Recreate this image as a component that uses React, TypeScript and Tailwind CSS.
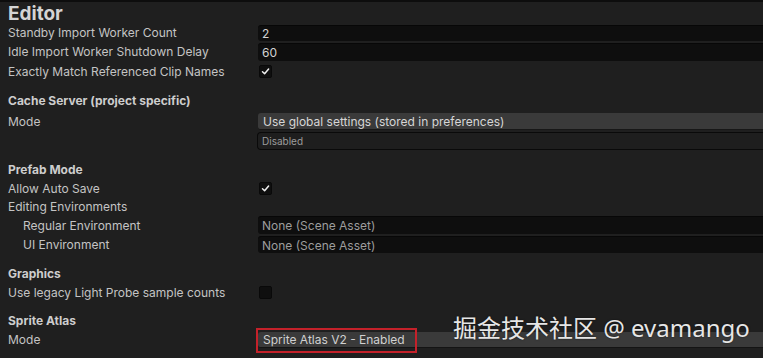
import React from "react";

const font = { fontFamily: "Inter, 'Noto Sans', sans-serif" };

function Check({ on }: { on: boolean }) {
  return (
    <div className="w-[13px] h-[13px] rounded-[2px] bg-[#0f0f0f] border border-[#090909] flex items-center justify-center">
      {on && (
        <svg width="9" height="9" viewBox="0 0 9 9">
          <polyline points="1.5,4.8 3.6,6.8 7.6,2" fill="none" stroke="#eeeeee" strokeWidth="1.5" strokeLinecap="round" strokeLinejoin="round" />
        </svg>
      )}
    </div>
  );
}

function Row({ label, h = "h-[19px]", indent = false, children }: { label?: string; h?: string; indent?: boolean; children?: React.ReactNode }) {
  return (
    <div className={`flex items-center ${h}`}>
      <div className={`w-[258px] shrink-0 text-[12px] text-[#c4c4c4] leading-none pt-[1px] ${indent ? "pl-[23px]" : "pl-[8px]"}`}>{label}</div>
      <div className="flex-1 min-w-0 flex items-center h-full">{children}</div>
    </div>
  );
}

function Heading({ text }: { text: string }) {
  return <div className="h-[19px] flex items-center pl-[8px] pt-[1px] text-[12px] font-bold text-[#cdcdcd] leading-none">{text}</div>;
}

function Field({ text, dim = false, h = "h-[17px]" }: { text: string; dim?: boolean; h?: string }) {
  return (
    <div className={`w-full ${h} bg-[#0e0e0e] border-t border-[#070707] rounded-l-[3px] flex items-center pl-[4px] pt-[1px] text-[12px] leading-none ${dim ? "text-[#9d9d9d]" : "text-[#d2d2d2]"}`}>
      {text}
    </div>
  );
}

export default function App() {
  return (
    <div className="relative w-[763px] h-[358px] overflow-hidden bg-[#1f1f1f]" style={font}>
      <div className="h-[2px] bg-[#0d0d0d]" />
      <div className="h-[21px] flex items-center pl-[8px] text-[19px] font-bold text-[#d4d4d4] leading-none pt-[2px]">Editor</div>

      <Row label="Standby Import Worker Count"><Field text="2" h="h-[16px]" /></Row>
      <Row label="Idle Import Worker Shutdown Delay"><Field text="60" h="h-[18px]" /></Row>
      <Row label="Exactly Match Referenced Clip Names" h="h-[21px]"><div className="pl-[1px]"><Check on /></div></Row>

      <div className="h-[9px]" />
      <Heading text="Cache Server (project specific)" />
      <div className="h-[2px]" />
      <Row label="Mode">
        <div className="w-full h-[17px] bg-[#3a3a3a] border-b border-[#171717] rounded-l-[3px] flex items-center pl-[5px] pt-[1px] text-[12px] text-[#d6d6d6] leading-none">
          Use global settings (stored in preferences)
        </div>
      </Row>
      <div className="flex items-center h-[19px]">
        <div className="w-[257px] shrink-0" />
        <div className="flex-1 h-[18px] bg-[#1e1e1e] border border-[#0a0a0a] border-r-0 rounded-l-[4px] flex items-center pl-[4px] pt-[1px] text-[10px] text-[#9c9c9c] leading-none">
          Disabled
        </div>
      </div>

      <div className="h-[10px]" />
      <Heading text="Prefab Mode" />
      <Row label="Allow Auto Save"><div className="pl-[1px]"><Check on /></div></Row>
      <Row label="Editing Environments" h="h-[17px]" />
      <Row label="Regular Environment" indent h="h-[20px]"><Field text="None (Scene Asset)" dim h="h-[18px]" /></Row>
      <Row label="UI Environment" indent><Field text="None (Scene Asset)" dim h="h-[17px]" /></Row>

      <div className="h-[10px]" />
      <Heading text="Graphics" />
      <Row label="Use legacy Light Probe sample counts"><div className="pl-[1px]"><Check on={false} /></div></Row>

      <div className="h-[9px]" />
      <Heading text="Sprite Atlas" />
      <Row label="Mode">
        <div className="w-full h-[16px] bg-[#3a3a3a] border-b border-[#141414] rounded-l-[3px] flex items-center pl-[5px] pt-[1px] text-[12px] text-[#d0d0d0] leading-none">
          Sprite Atlas V2 - Enabled
        </div>
      </Row>

      {/* red annotation box */}
      <div className="absolute left-[256px] top-[328px] w-[161px] h-[25px] border-2 border-[#c4212a]" />

      {/* watermark */}
      <div
        className="absolute left-[453px] top-[311px] text-[24px] leading-[34px] text-[#e6e6e6] whitespace-nowrap [text-shadow:0_0_2px_rgba(0,0,0,0.6)]"
        style={{ fontFamily: "'Noto Sans', 'Noto Sans CJK SC', sans-serif" }}
      >
        掘金技术社区 @ evamango
      </div>
    </div>
  );
}
